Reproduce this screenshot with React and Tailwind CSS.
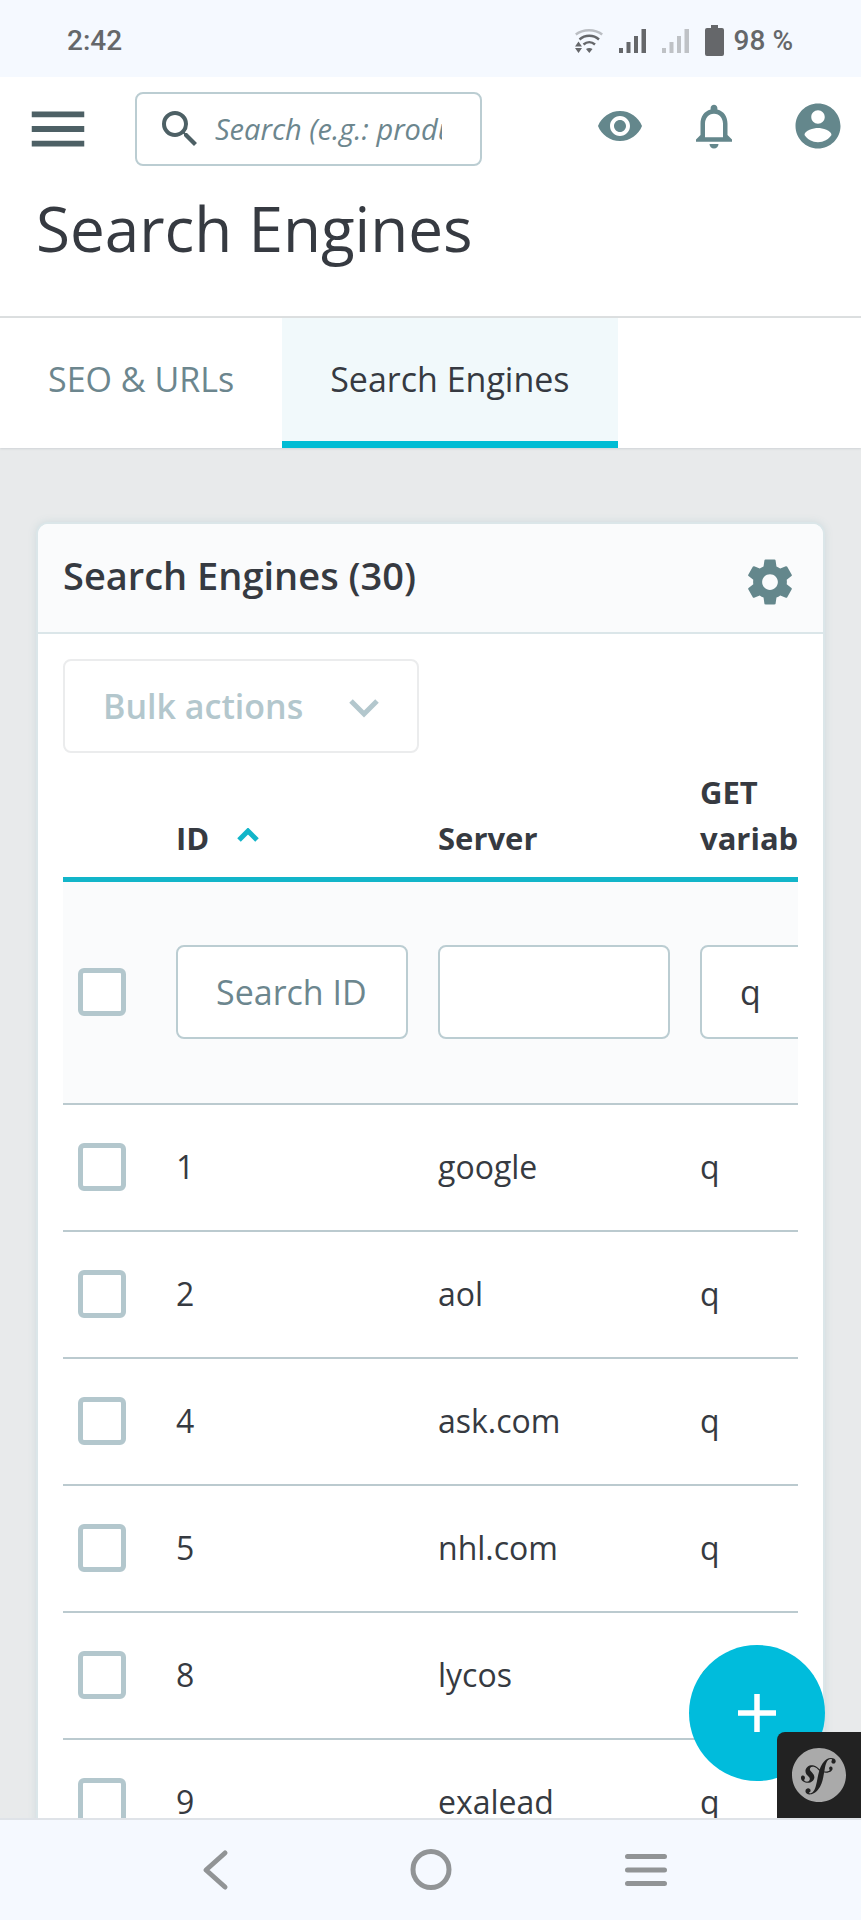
import { useState } from "react";
import { MdMenu, MdSearch, MdVisibility } from "react-icons/md";
import { SiSymfony } from "react-icons/si";

const engines = [
  { id: 1, server: "google", variable: "q" },
  { id: 2, server: "aol", variable: "q" },
  { id: 4, server: "ask.com", variable: "q" },
  { id: 5, server: "nhl.com", variable: "q" },
  { id: 8, server: "lycos", variable: "q" },
  { id: 9, server: "exalead", variable: "q" },
];

const checkboxStyle =
  "block size-12 appearance-none rounded-md border-5 border-[#b3c7cd] bg-white checked:bg-[#00bcd4]";
const filterStyle =
  "block h-[94px] w-full rounded-lg border-2 border-[#bbcdd2] bg-white pr-5 pl-[38px] text-[34px] placeholder:text-[#6c868e] placeholder:opacity-100";

function Signal({ className }) {
  return (
    <svg viewBox="0 0 27 24" className={className} fill="currentColor" aria-hidden="true">
      <rect x="0" y="19" width="4" height="5" />
      <rect x="7.5" y="13" width="4" height="11" />
      <rect x="15" y="7" width="4" height="17" />
      <rect x="22.5" y="0" width="4.5" height="24" />
    </svg>
  );
}

function StatusBar() {
  return (
    <div className="flex h-[77px] shrink-0 items-center justify-between bg-[#f5f9ff] pr-[68px] pl-[67px] pt-1 font-[Roboto,sans-serif] text-[28px] font-medium text-[#65676a]">
      <span>2:42</span>
      <div className="flex items-center">
        <svg viewBox="0 0 28 24" className="mr-4 h-6 w-7" fill="none" stroke="currentColor" strokeWidth="2.4" aria-hidden="true">
          <path d="M.8 5.5C8-.2 20-.2 27.200 5.500" opacity=".4" />
          <path d="M4.500 10.500c5.500-5 14-5 19.500 0" />
          <path d="M8.500 15.500c3.500-3.200 8-3.200 11.500 0" />
          <path d="M0 17.500l3.500-5 3.500 5zM0 19h7l-3.500 5zM11 20c2-1.500 4.500-1.500 6.500 0L14.300 24z" fill="currentColor" stroke="none" />
        </svg>
        <Signal className="mr-4 h-6 w-[27px]" />
        <Signal className="mr-4 h-6 w-[27px] text-[#bfc2c6]" />
        <svg viewBox="0 0 19 31" className="mr-2.5 h-[31px] w-[19px]" fill="currentColor" aria-hidden="true">
          <path d="M6 0h7v3h4a2 2 0 0 1 2 2v24a2 2 0 0 1-2 2H2a2 2 0 0 1-2-2V5a2 2 0 0 1 2-2h4z" />
        </svg>
        <span>98 %</span>
      </div>
    </div>
  );
}

function Header() {
  return (
    <header className="border-b-2 border-[#dcdfe0] bg-white pt-[15px] pb-12">
      <div className="flex items-center pr-4 pl-[23px]">
        <button aria-label="Menu" className="mr-[42px] text-[#4d6065]">
          <MdMenu className="size-[70px]" />
        </button>
        <label className="flex h-[74px] w-[347px] items-center rounded-lg border-2 border-[#bbcdd2] pr-[38px] pl-[19px]">
          <MdSearch className="mr-[11px] size-12 shrink-0 text-[#4d6065]" />
          <input
            type="text"
            aria-label="Search"
            placeholder="Search (e.g.: product reference, customer name…)"
            className="min-w-0 flex-1 text-[29px] italic placeholder:text-[#6c868e] placeholder:opacity-100"
          />
        </label>
        <div className="ml-auto flex items-center pb-1.5 text-[#64878c]">
          <button aria-label="View my store" className="mr-[43px]">
            <MdVisibility className="size-12" />
          </button>
          <button aria-label="Notifications" className="mr-[50px]">
            <svg viewBox="0 0 24 24" className="size-[54px]" fill="currentColor">
              <path d="M12 22c1.100 0 2-.9 2-2h-4c0 1.100.9 2 2 2zm6-6v-5c0-3.070-1.630-5.640-4.500-6.320V4c0-.83-.67-1.500-1.500-1.500s-1.500.67-1.500 1.500v.68C7.640 5.360 6 7.920 6 11v5l-2 2v1h16v-1l-2-2zm-2 1H8v-6c0-2.480 1.510-4.500 4-4.500s4 2.020 4 4.500v6z" />
            </svg>
          </button>
          <button aria-label="Account">
            <svg viewBox="0 0 24 24" className="size-[54px]" fill="currentColor">
              <path d="M12 2C6.480 2 2 6.480 2 12s4.480 10 10 10 10-4.480 10-10S17.520 2 12 2zm0 3c1.660 0 3 1.340 3 3s-1.340 3-3 3-3-1.340-3-3 1.340-3 3-3zm0 14.200c-2.500 0-4.710-1.280-6-3.220.03-1.990 4-3.080 6-3.080 1.990 0 5.970 1.090 6 3.080-1.290 1.940-3.500 3.220-6 3.220z" />
            </svg>
          </button>
        </div>
      </div>
      <h1 className="mt-[22px] px-9 text-[62px] leading-[80px]">Search Engines</h1>
    </header>
  );
}

function Tabs() {
  return (
    <nav className="flex h-[130px] bg-white text-[34px] shadow-[0_1px_2px_#cfd4d6]">
      <a href="#seo" className="flex items-center px-12 pb-2 text-[#6c868e]">
        SEO &amp; URLs
      </a>
      <a href="#engines" aria-current="page" className="flex items-center border-b-7 border-[#00bcd4] bg-[#f1f9fb] px-12 pb-px">
        Search Engines
      </a>
    </nav>
  );
}

function EngineTable() {
  const [selected, setSelected] = useState([]);

  const toggle = (id) =>
    setSelected((prev) =>
      prev.includes(id) ? prev.filter((x) => x !== id) : [...prev, id]
    );

  const toggleAll = (e) =>
    setSelected(e.target.checked ? engines.map((engine) => engine.id) : []);

  return (
    <div className="overflow-hidden">
      <table className="w-[884px] table-fixed border-collapse text-left text-[32px] leading-[46px]">
        <colgroup>
          <col className="w-[98px]" />
          <col className="w-[262px]" />
          <col className="w-[262px]" />
          <col className="w-[262px]" />
        </colgroup>
        <thead>
          <tr className="border-b-5 border-[#12b5c9] align-bottom text-[31px]">
            <th></th>
            <th className="px-[15px] pt-4 pb-4">
              <button className="flex items-center gap-7 font-bold">
                ID
                <svg viewBox="0 0 22 14" className="mb-1.5 h-3.5 w-[22px]" fill="none" stroke="#12b5c9" strokeWidth="5" aria-hidden="true">
                  <path d="M2 12l9-9 9 9" />
                </svg>
              </button>
            </th>
            <th className="px-[15px] pt-4 pb-4">Server</th>
            <th className="px-[15px] pt-4 pb-4">
              GET
              <br />
              variable
            </th>
          </tr>
          <tr className="h-[224px] border-b-2 border-[#bbcacf] bg-[#fafbfc]">
            <td className="px-[15px]">
              <input type="checkbox" aria-label="Select all" className={checkboxStyle} onChange={toggleAll} />
            </td>
            <td className="px-[15px]">
              <input type="text" aria-label="Search ID" placeholder="Search ID" className={filterStyle} />
            </td>
            <td className="px-[15px]">
              <input type="text" aria-label="Server" className={filterStyle} />
            </td>
            <td className="px-[15px]">
              <input type="text" aria-label="GET variable" defaultValue="q" className={filterStyle} />
            </td>
          </tr>
        </thead>
        <tbody>
          {engines.map((engine) => (
            <tr key={engine.id} className="h-[127px] border-b-2 border-[#bbcacf]">
              <td className="px-[15px]">
                <input
                  type="checkbox"
                  aria-label={engine.server}
                  className={checkboxStyle}
                  checked={selected.includes(engine.id)}
                  onChange={() => toggle(engine.id)}
                />
              </td>
              <td className="px-[15px]">{engine.id}</td>
              <td className="px-[15px]">{engine.server}</td>
              <td className="px-[15px]">{engine.variable}</td>
            </tr>
          ))}
        </tbody>
      </table>
    </div>
  );
}

function NavigationBar() {
  return (
    <div className="grid h-[102px] shrink-0 grid-cols-3 items-center justify-items-center border-t-2 border-[#dfe3e8] bg-[#f5f9ff] px-27 text-[#919496]">
      <button aria-label="Back">
        <svg viewBox="0 0 44 44" className="size-11" fill="none" stroke="currentColor" strokeWidth="5" strokeLinecap="round" strokeLinejoin="round">
          <path d="M31 5L12 22 31 39" />
        </svg>
      </button>
      <button aria-label="Home">
        <svg viewBox="0 0 44 44" className="size-11" fill="none" stroke="currentColor" strokeWidth="5">
          <circle cx="22" cy="21.500" r="18" />
        </svg>
      </button>
      <button aria-label="Recent apps">
        <svg viewBox="0 0 44 44" className="size-11" fill="none" stroke="currentColor" strokeWidth="5" strokeLinecap="round">
          <path d="M3.500 8.500h37M3.500 22h37M3.500 35.500h37" />
        </svg>
      </button>
    </div>
  );
}

export default function App() {
  return (
    <div className="flex h-screen flex-col overflow-hidden bg-[#e8eaeb] font-['Open_Sans','Noto_Sans',sans-serif] text-[#363a41]">
      <StatusBar />

      <div className="relative min-h-0 flex-1 overflow-hidden">
        <Header />
        <Tabs />

        <main className="px-9 pt-[74px]">
          <section className="rounded-xl border-2 border-[#dbe6e9] bg-white shadow-[0_0_8px_#cfdadd]">
            <div className="flex h-[110px] items-center justify-between rounded-t-[10px] border-b-2 border-[#dbe6e9] bg-[#fafbfc] pr-[26px] pl-[25px]">
              <h2 className="pb-1.5 text-[38px] font-semibold">Search Engines (30)</h2>
              <button aria-label="Settings" className="pt-2 text-[#64878c]">
                <svg viewBox="0 0 24 24" className="size-[54px]" fill="currentColor">
                  <path d="M19.430 12.980c.04-.32.07-.64.07-.98s-.03-.66-.07-.98l2.110-1.650c.19-.15.24-.42.12-.64l-2-3.460c-.12-.22-.39-.3-.61-.22l-2.490 1c-.52-.4-1.080-.73-1.690-.98l-.38-2.650C14.460 2.180 14.250 2 14 2h-4c-.25 0-.46.18-.49.42l-.38 2.650c-.61.25-1.170.59-1.690.98l-2.490-1c-.23-.09-.49 0-.61.22l-2 3.460c-.13.22-.07.49.12.64l2.110 1.650c-.04.32-.07.65-.07.98s.03.66.07.98l-2.110 1.650c-.19.15-.24.42-.12.64l2 3.460c.12.22.39.3.61.22l2.490-1c.52.4 1.080.73 1.690.98l.38 2.650c.03.24.24.42.49.42h4c.25 0 .46-.18.49-.42l.38-2.650c.61-.25 1.170-.59 1.690-.98l2.490 1c.23.09.49 0 .61-.22l2-3.460c.12-.22.07-.49-.12-.64l-2.110-1.650zM12 15.500c-1.930 0-3.500-1.570-3.500-3.500s1.570-3.500 3.500-3.500 3.500 1.570 3.500 3.500-1.570 3.500-3.500 3.500z" />
                </svg>
              </button>
            </div>

            <div className="p-[25px]">
              <button
                disabled
                className="flex h-[94px] w-[356px] items-center justify-between rounded-lg border-2 border-[#ebeced] px-[38px] text-[34px] font-semibold text-[#b3c7cd]"
              >
                Bulk actions
                <svg viewBox="0 0 30 20" className="mt-1 h-5 w-[30px]" fill="none" stroke="currentColor" strokeWidth="5" aria-hidden="true">
                  <path d="M2 3l13 13L28 3" />
                </svg>
              </button>
              <EngineTable />
            </div>
          </section>
        </main>

        {/* Floating add button and debug toolbar toggle */}
        <button
          aria-label="Add new search engine"
          className="absolute right-9 bottom-[37px] flex size-[136px] items-center justify-center rounded-full bg-[#00bcdc] text-white"
        >
          <svg viewBox="0 0 38 38" className="size-[38px]" fill="none" stroke="currentColor" strokeWidth="5.500">
            <path d="M19 0v38M0 19h38" />
          </svg>
        </button>
        <button
          aria-label="Open debug toolbar"
          className="absolute right-0 bottom-0 flex h-[86px] w-[84px] items-center justify-center rounded-tl-lg bg-[#222] text-[#aaa]"
        >
          <SiSymfony className="size-[54px]" />
        </button>
      </div>

      <NavigationBar />
    </div>
  );
}
